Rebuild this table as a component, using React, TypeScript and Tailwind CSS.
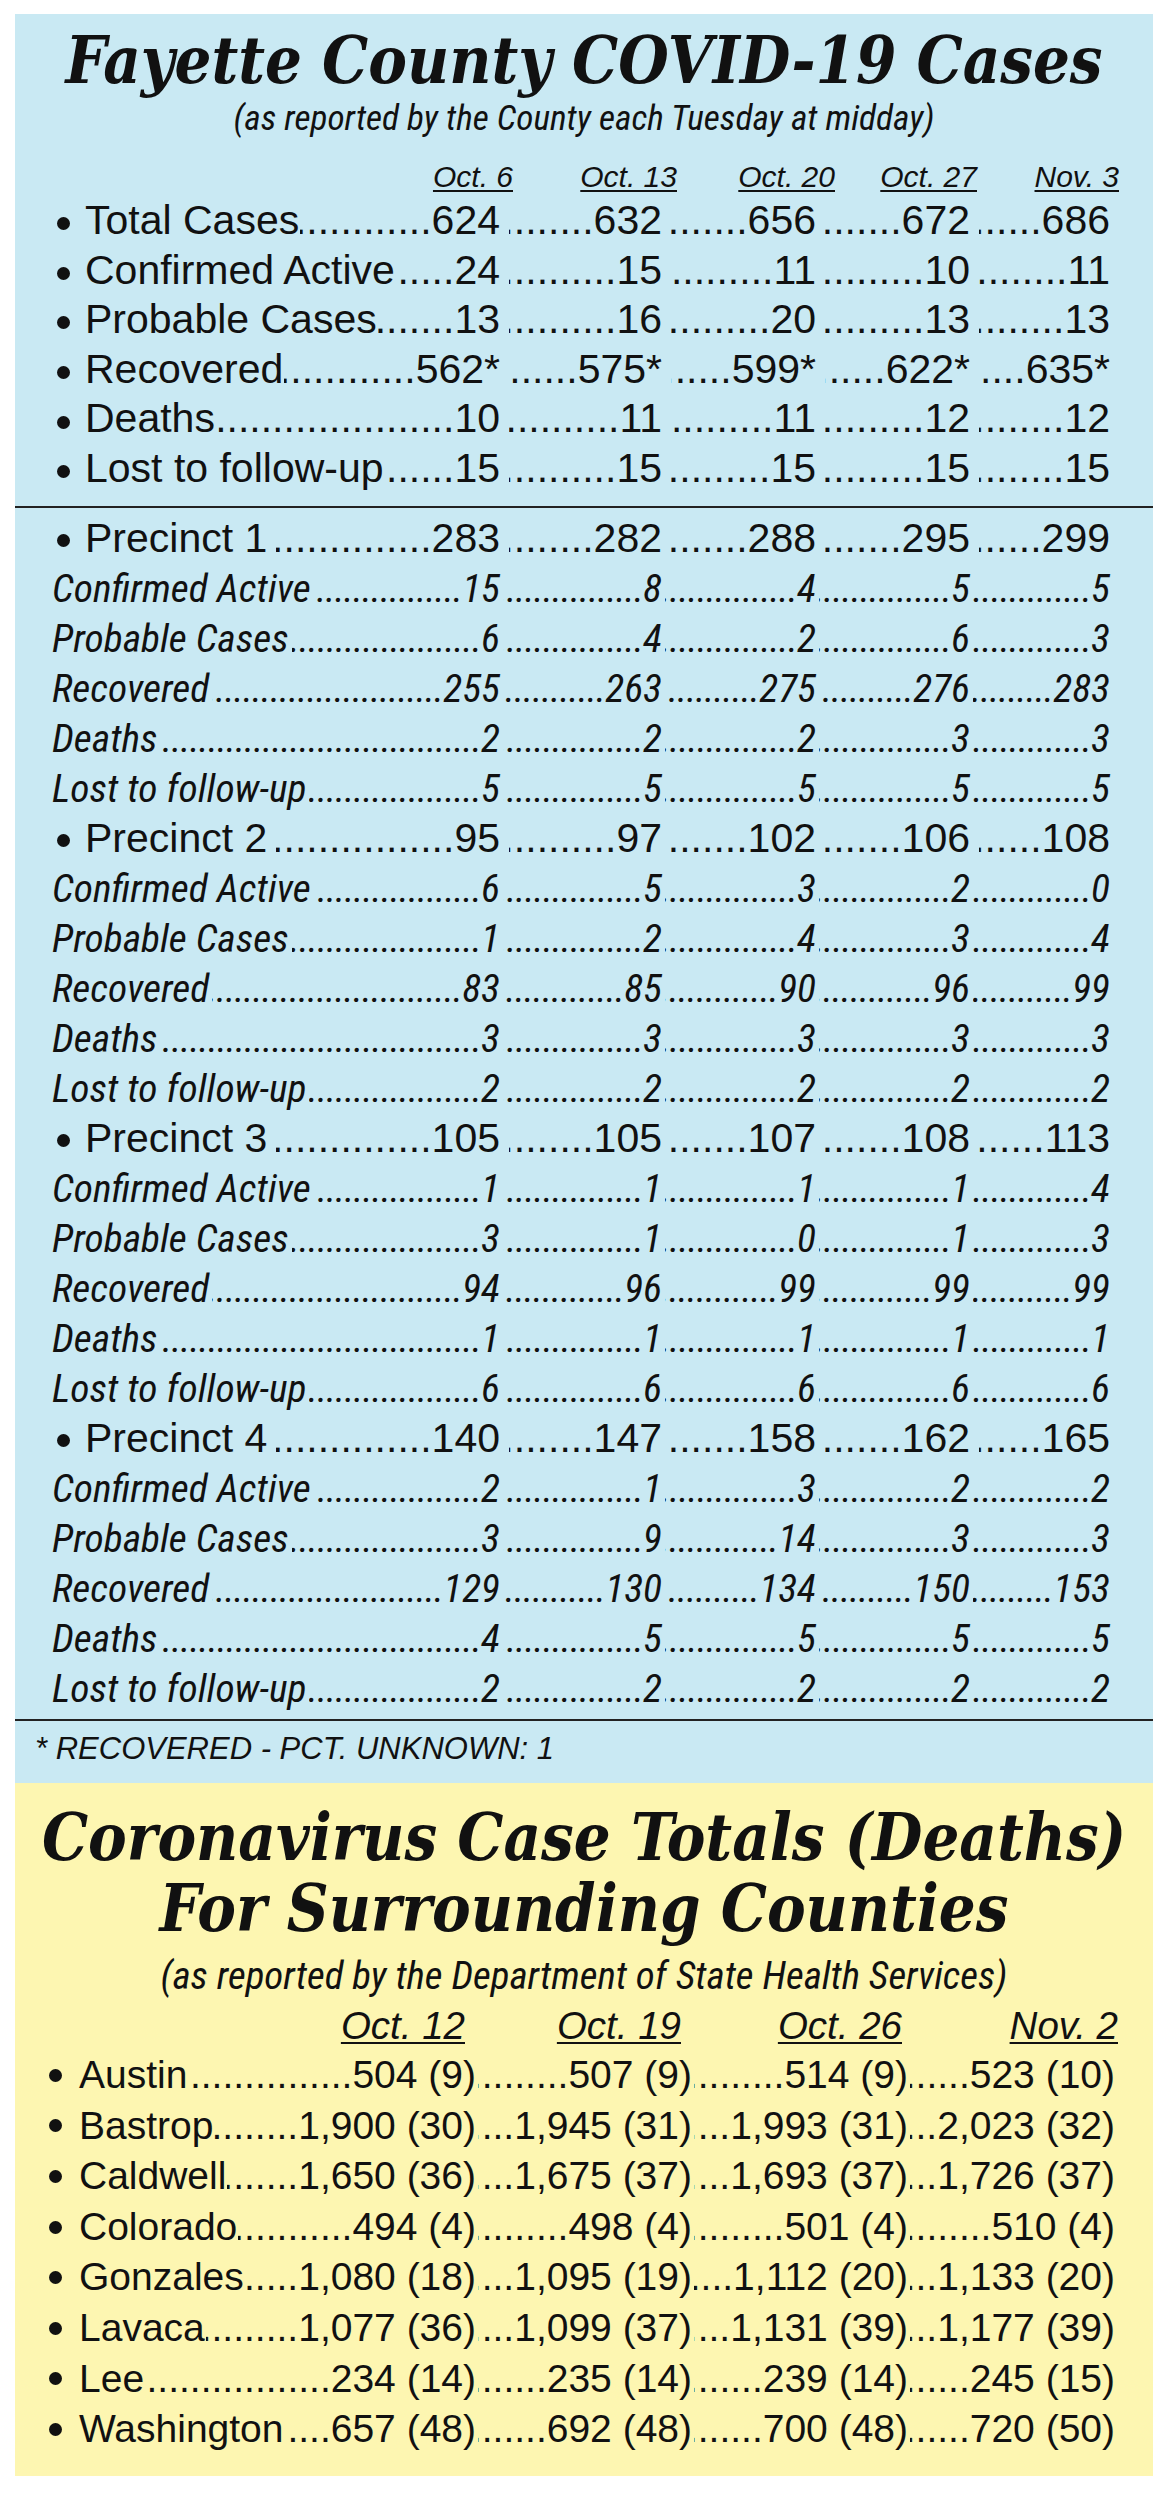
const DOTS = '.'.repeat(140);

const TOP_COLS = 'grid grid-cols-[443px_162px_154px_154px_140px]';
const YEL_COLS = 'grid grid-cols-[427px_216px_216px_207px]';

const topDates = [
  { d: 'Oct. 6', cls: 'mr-[-13px]' },
  { d: 'Oct. 13', cls: 'mr-[-15px]' },
  { d: 'Oct. 20', cls: 'mr-[-19px]' },
  { d: 'Oct. 27', cls: 'mr-[-7px]' },
  { d: 'Nov. 3', cls: 'mr-[-9px]' },
];

const countyRows: [string, string[]][] = [
  ['Total Cases', ['624', '632', '656', '672', '686']],
  ['Confirmed Active', ['24', '15', '11', '10', '11']],
  ['Probable Cases', ['13', '16', '20', '13', '13']],
  ['Recovered', ['562*', '575*', '599*', '622*', '635*']],
  ['Deaths', ['10', '11', '11', '12', '12']],
  ['Lost to follow-up', ['15', '15', '15', '15', '15']],
];

type Precinct = { name: string; total: string[]; rows: [string, string[]][] };

const precincts: Precinct[] = [
  {
    name: 'Precinct 1',
    total: ['283', '282', '288', '295', '299'],
    rows: [
      ['Confirmed Active', ['15', '8', '4', '5', '5']],
      ['Probable Cases', ['6', '4', '2', '6', '3']],
      ['Recovered', ['255', '263', '275', '276', '283']],
      ['Deaths', ['2', '2', '2', '3', '3']],
      ['Lost to follow-up', ['5', '5', '5', '5', '5']],
    ],
  },
  {
    name: 'Precinct 2',
    total: ['95', '97', '102', '106', '108'],
    rows: [
      ['Confirmed Active', ['6', '5', '3', '2', '0']],
      ['Probable Cases', ['1', '2', '4', '3', '4']],
      ['Recovered', ['83', '85', '90', '96', '99']],
      ['Deaths', ['3', '3', '3', '3', '3']],
      ['Lost to follow-up', ['2', '2', '2', '2', '2']],
    ],
  },
  {
    name: 'Precinct 3',
    total: ['105', '105', '107', '108', '113'],
    rows: [
      ['Confirmed Active', ['1', '1', '1', '1', '4']],
      ['Probable Cases', ['3', '1', '0', '1', '3']],
      ['Recovered', ['94', '96', '99', '99', '99']],
      ['Deaths', ['1', '1', '1', '1', '1']],
      ['Lost to follow-up', ['6', '6', '6', '6', '6']],
    ],
  },
  {
    name: 'Precinct 4',
    total: ['140', '147', '158', '162', '165'],
    rows: [
      ['Confirmed Active', ['2', '1', '3', '2', '2']],
      ['Probable Cases', ['3', '9', '14', '3', '3']],
      ['Recovered', ['129', '130', '134', '150', '153']],
      ['Deaths', ['4', '5', '5', '5', '5']],
      ['Lost to follow-up', ['2', '2', '2', '2', '2']],
    ],
  },
];

const yelDates = [
  { d: 'Oct. 12', cls: 'mr-[11px]' },
  { d: 'Oct. 19', cls: 'mr-[11px]' },
  { d: 'Oct. 26', cls: 'mr-[6px]' },
  { d: 'Nov. 2', cls: 'mr-[-3px]' },
];

const counties: [string, string[]][] = [
  ['Austin', ['504 (9)', '507 (9)', '514 (9)', '523 (10)']],
  ['Bastrop', ['1,900 (30)', '1,945 (31)', '1,993 (31)', '2,023 (32)']],
  ['Caldwell', ['1,650 (36)', '1,675 (37)', '1,693 (37)', '1,726 (37)']],
  ['Colorado', ['494 (4)', '498 (4)', '501 (4)', '510 (4)']],
  ['Gonzales', ['1,080 (18)', '1,095 (19)', '1,112 (20)', '1,133 (20)']],
  ['Lavaca', ['1,077 (36)', '1,099 (37)', '1,131 (39)', '1,177 (39)']],
  ['Lee', ['234 (14)', '235 (14)', '239 (14)', '245 (15)']],
  ['Washington', ['657 (48)', '692 (48)', '700 (48)', '720 (50)']],
];

// dot leader: right-aligned, the surplus is clipped on the left
function Leader({ className = '' }: { className?: string }) {
  return (
    <span className={`flex min-w-0 flex-1 justify-end overflow-hidden whitespace-nowrap ${className}`}>
      {DOTS}
    </span>
  );
}

function Bullet({ className = '' }: { className?: string }) {
  return <span className={`size-[13px] shrink-0 self-center rounded-full bg-[#111] ${className}`} />;
}

function Row({
  cols,
  label,
  values,
  bullet,
  labelCls = '',
  dotCls = '',
  gapCls = 'ml-[9px]',
}: {
  cols: string;
  label: string;
  values: string[];
  bullet?: React.ReactNode;
  labelCls?: string;
  dotCls?: string;
  gapCls?: string;
}) {
  return (
    <div className={cols}>
      <div className="flex min-w-0">
        {bullet}
        <span className={`shrink-0 whitespace-nowrap ${labelCls}`}>{label}</span>
        <Leader className={`ml-[1px] ${dotCls}`} />
        <span className="shrink-0">{values[0]}</span>
      </div>
      {values.slice(1).map((v, i) => (
        <div key={i} className="flex min-w-0">
          <Leader className={`${gapCls} ${dotCls}`} />
          <span className="shrink-0">{v}</span>
        </div>
      ))}
    </div>
  );
}

export default function App() {
  return (
    <div className="min-h-[2497px] w-[1166px] bg-white pt-[14px] text-[#111] [font-family:'Liberation_Sans',Arial,sans-serif]">
      <div className="ml-[15px] w-[1138px]">
        {/* Fayette County panel */}
        <section className="bg-[#c9e9f3] pt-[11px] pb-[16px]">
          <h1 className="text-center text-[64.5px] leading-[70px] font-bold italic [font-family:'DejaVu_Serif_Condensed','DejaVu_Serif',serif]">
            Fayette County COVID-19 Cases
          </h1>
          <p className="mt-[3px] text-center text-[35.3px] leading-[40px] italic [font-family:'Roboto_Condensed',Roboto,sans-serif]">
            (as reported by the County each Tuesday at midday)
          </p>

          <div className="pl-[42px]">
            <div className={`${TOP_COLS} mt-[21px] text-[30px] leading-[35px] italic`}>
              {topDates.map((d) => (
                <div key={d.d} className="flex justify-end">
                  <span className={`whitespace-nowrap underline decoration-[1.5px] underline-offset-[3px] ${d.cls}`}>{d.d}</span>
                </div>
              ))}
            </div>

            <div className="mt-[2px] text-[41px] leading-[49.6px]">
              {countyRows.map(([label, values]) => (
                <Row
                  key={label}
                  cols={TOP_COLS}
                  label={label}
                  values={values}
                  bullet={<Bullet className="mr-[15px] translate-y-[3px]" />}
                />
              ))}
            </div>
          </div>

          <div className="mt-[12px] border-t-2 border-[#222]" />

          <div className="mt-[5px] pl-[42px]">
            {precincts.map((p) => (
              <div key={p.name}>
                <div className="h-[50px] text-[41px] leading-[50px]">
                  <Row
                    cols={TOP_COLS}
                    label={p.name}
                    values={p.total}
                    bullet={<Bullet className="mr-[15px] translate-y-[3px]" />}
                    labelCls="pr-[8px]"
                  />
                </div>
                {p.rows.map(([label, values]) => (
                  <div
                    key={label}
                    className="h-[50px] text-[39.5px] leading-[51px] italic [font-family:'Roboto_Condensed',Roboto,sans-serif]"
                  >
                    <Row
                      cols={TOP_COLS}
                      label={label}
                      values={values}
                      labelCls="ml-[-5px] pr-[2px]"
                      dotCls="tracking-[-1px]"
                      gapCls="ml-[3px]"
                    />
                  </div>
                ))}
              </div>
            ))}
          </div>

          <div className="mt-[6px] border-t-2 border-[#222]" />

          <p className="mt-[10px] pl-[20px] text-[31px] leading-[36px] italic">* RECOVERED - PCT. UNKNOWN: 1</p>
        </section>

        {/* Surrounding counties panel */}
        <section className="bg-[#fdf6b1] pt-[19px] pb-[21px]">
          <h2 className="text-center text-[64.5px] leading-[71px] font-bold italic [font-family:'DejaVu_Serif_Condensed','DejaVu_Serif',serif]">
            Coronavirus Case Totals (Deaths)
            <br />
            For Surrounding Counties
          </h2>
          <p className="mt-[10px] text-center text-[39px] leading-[44px] italic [font-family:'Roboto_Condensed',Roboto,sans-serif]">
            (as reported by the Department of State Health Services)
          </p>

          <div className="pl-[34px]">
            <div className={`${YEL_COLS} mt-[6px] text-[38.5px] leading-[44px] italic`}>
              {yelDates.map((d) => (
                <div key={d.d} className="flex justify-end">
                  <span className={`whitespace-nowrap underline decoration-[1.5px] underline-offset-[3px] ${d.cls}`}>{d.d}</span>
                </div>
              ))}
            </div>

            <div className="mt-[2.5px] text-[39px] leading-[50.6px]">
              {counties.map(([label, values]) => (
                <Row
                  key={label}
                  cols={YEL_COLS}
                  label={label}
                  values={values}
                  bullet={<Bullet className="mr-[17px]" />}
                  gapCls="ml-[2px]"
                />
              ))}
            </div>
          </div>
        </section>
      </div>
    </div>
  );
}
